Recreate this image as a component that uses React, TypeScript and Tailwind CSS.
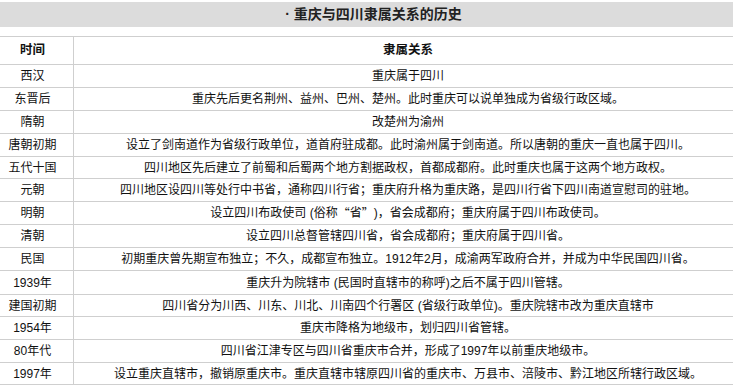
import React from "react";

const rows: { t: string; d: React.ReactNode; h: string }[] = [
  { t: "西汉", d: "重庆属于四川", h: "h-[23px]" },
  { t: "东晋后", d: "重庆先后更名荆州、益州、巴州、楚州。此时重庆可以说单独成为省级行政区域。", h: "h-[23px]" },
  { t: "隋朝", d: "改楚州为渝州", h: "h-[23px]" },
  { t: "唐朝初期", d: "设立了剑南道作为省级行政单位，道首府驻成都。此时渝州属于剑南道。所以唐朝的重庆一直也属于四川。", h: "h-[23px]" },
  { t: "五代十国", d: "四川地区先后建立了前蜀和后蜀两个地方割据政权，首都成都府。此时重庆也属于这两个地方政权。", h: "h-[22px]" },
  { t: "元朝", d: "四川地区设四川等处行中书省，通称四川行省；重庆府升格为重庆路，是四川行省下四川南道宣慰司的驻地。", h: "h-[23px]" },
  {
    t: "明朝",
    d: (
      <>
        设立四川布政使司 (俗称<span style={{ fontFamily: '"Noto Sans CJK SC", sans-serif' }}>“</span>省
        <span style={{ fontFamily: '"Noto Sans CJK SC", sans-serif' }}>”</span>)，省会成都府；重庆府属于四川布政使司。
      </>
    ),
    h: "h-[23px]",
  },
  { t: "清朝", d: "设立四川总督管辖四川省，省会成都府；重庆府属于四川省。", h: "h-[23px]" },
  { t: "民国", d: "初期重庆曾先期宣布独立；不久，成都宣布独立。1912年2月，成渝两军政府合并，并成为中华民国四川省。", h: "h-[23px]" },
  { t: "1939年", d: "重庆升为院辖市 (民国时直辖市的称呼)之后不属于四川管辖。", h: "h-[24px]" },
  { t: "建国初期", d: "四川省分为川西、川东、川北、川南四个行署区 (省级行政单位)。重庆院辖市改为重庆直辖市", h: "h-[22px]" },
  { t: "1954年", d: "重庆市降格为地级市，划归四川省管辖。", h: "h-[23px]" },
  { t: "80年代", d: "四川省江津专区与四川省重庆市合并，形成了1997年以前重庆地级市。", h: "h-[23px]" },
  { t: "1997年", d: "设立重庆直辖市，撤销原重庆市。重庆直辖市辖原四川省的重庆市、万县市、涪陵市、黔江地区所辖行政区域。", h: "h-[22px]" },
];

export default function App() {
  return (
    <div
      className="w-[733px] h-[388px] overflow-hidden bg-white text-[#111]"
      style={{ fontFamily: '"Liberation Sans", "Noto Sans CJK SC", sans-serif' }}
    >
      <div className="pt-[2px]">
        <div className="h-[25px] bg-[#dcdcdc] flex items-center justify-center pl-[14px] text-[14px] font-bold text-[#222]">
          · 重庆与四川隶属关系的历史
        </div>
      </div>
      <div className="mt-[9px] w-[742px] border-t border-[#cfcfcf] text-[12px] leading-none">
        <div className="flex h-[28px] border-b border-[#cfcfcf] font-bold text-[12.5px]">
          <div className="w-[74px] border-r border-[#cfcfcf] flex items-center justify-center pr-[8px]">时间</div>
          <div className="flex-1 flex items-center justify-center">隶属关系</div>
        </div>
        {rows.map((r) => (
          <div key={r.t} className={`flex border-b border-[#cfcfcf] ${r.h}`}>
            <div className="w-[74px] border-r border-[#cfcfcf] flex items-center justify-center pr-[8px] whitespace-nowrap">
              {r.t}
            </div>
            <div className="flex-1 flex items-center justify-center whitespace-nowrap">{r.d}</div>
          </div>
        ))}
      </div>
    </div>
  );
}
